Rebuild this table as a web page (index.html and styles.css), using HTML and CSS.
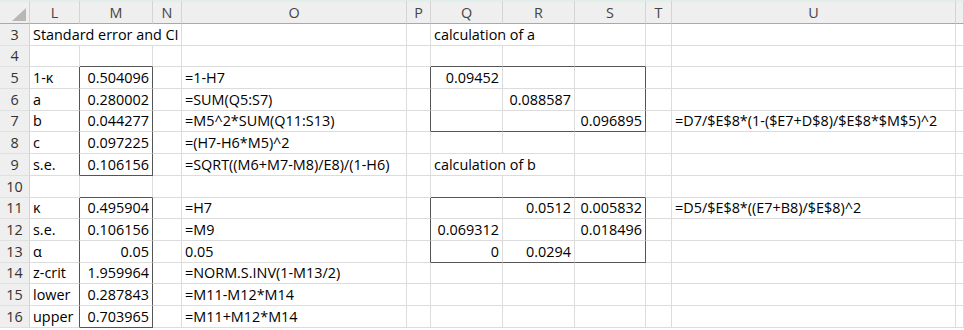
FILE: index.html
```html
<!DOCTYPE html>
<html>
    <head>
        <meta charset='utf-8'>
        <title>Standard error and CI</title>
        <link rel="stylesheet" href="styles.css">
    </head>
    <body>
        <table class="sheet">
            <colgroup>
                <col class="c-hdr"><col class="c-l"><col class="c-m"><col class="c-n"><col class="c-o"><col class="c-p">
                <col class="c-q"><col class="c-r"><col class="c-s"><col class="c-t"><col class="c-u"><col class="c-v">
            </colgroup>
            <tr class="colhead">
                <th class="corner"><span class="tri"></span></th>
                <th>L</th><th>M</th><th>N</th><th>O</th><th>P</th><th>Q</th><th>R</th><th>S</th><th>T</th><th>U</th><th></th>
            </tr>
            <tr>
                <th>3</th><td colspan="3">Standard error and CI</td><td></td><td></td><td colspan="2">calculation of a</td><td></td><td></td><td></td><td></td>
            </tr>
            <tr>
                <th>4</th><td></td><td class="b"></td><td></td><td></td><td></td><td class="b"></td><td class="b"></td><td class="b"></td><td></td><td></td><td></td>
            </tr>
            <tr>
                <th>5</th><td class="r">1-κ</td><td class="n r">0.504096</td><td></td><td>=1-H7</td><td class="r"></td><td class="n">0.09452</td><td></td><td class="r"></td><td></td><td></td><td></td>
            </tr>
            <tr>
                <th>6</th><td class="r">a</td><td class="n r">0.280002</td><td></td><td>=SUM(Q5:S7)</td><td class="r"></td><td></td><td class="n">0.088587</td><td class="r"></td><td></td><td></td><td></td>
            </tr>
            <tr>
                <th>7</th><td class="r">b</td><td class="n r">0.044277</td><td></td><td>=M5^2*SUM(Q11:S13)</td><td class="r"></td><td class="b"></td><td class="b"></td><td class="n r b">0.096895</td><td></td><td>=D7/$E$8*(1-($E7+D$8)/$E$8*$M$5)^2</td><td></td>
            </tr>
            <tr>
                <th>8</th><td class="r">c</td><td class="n r">0.097225</td><td></td><td>=(H7-H6*M5)^2</td><td></td><td></td><td></td><td></td><td></td><td></td><td></td>
            </tr>
            <tr>
                <th>9</th><td class="r">s.e.</td><td class="n r b">0.106156</td><td></td><td>=SQRT((M6+M7-M8)/E8)/(1-H6)</td><td></td><td colspan="2">calculation of b</td><td></td><td></td><td></td><td></td>
            </tr>
            <tr>
                <th>10</th><td></td><td class="b"></td><td></td><td></td><td></td><td class="b"></td><td class="b"></td><td class="b"></td><td></td><td></td><td></td>
            </tr>
            <tr>
                <th>11</th><td class="r">κ</td><td class="n r">0.495904</td><td></td><td>=H7</td><td class="r"></td><td></td><td class="n">0.0512</td><td class="n r">0.005832</td><td></td><td>=D5/$E$8*((E7+B8)/$E$8)^2</td><td></td>
            </tr>
            <tr>
                <th>12</th><td class="r">s.e.</td><td class="n r">0.106156</td><td></td><td>=M9</td><td class="r"></td><td class="n">0.069312</td><td></td><td class="n r">0.018496</td><td></td><td></td><td></td>
            </tr>
            <tr>
                <th>13</th><td class="r">α</td><td class="n r">0.05</td><td></td><td>0.05</td><td class="r"></td><td class="n b">0</td><td class="n b">0.0294</td><td class="r b"></td><td></td><td></td><td></td>
            </tr>
            <tr>
                <th>14</th><td class="r">z-crit</td><td class="n r">1.959964</td><td></td><td>=NORM.S.INV(1-M13/2)</td><td></td><td></td><td></td><td></td><td></td><td></td><td></td>
            </tr>
            <tr>
                <th>15</th><td class="r">lower</td><td class="n r">0.287843</td><td></td><td>=M11-M12*M14</td><td></td><td></td><td></td><td></td><td></td><td></td><td></td>
            </tr>
            <tr>
                <th>16</th><td class="r">upper</td><td class="n r b">0.703965</td><td></td><td>=M11+M12*M14</td><td></td><td></td><td></td><td></td><td></td><td></td><td></td>
            </tr>
        </table>
    </body>
</html>
```

FILE: styles.css
```css
html, body {
    margin: 0;
    background: #fff;
    overflow: hidden;
}
.sheet {
    border-collapse: separate;
    border-spacing: 0;
    table-layout: fixed;
    width: 964px;
    font: 14.4px/18px "Open Sans", sans-serif;
    color: #000;
}
.c-hdr { width: 30px; }
.c-l { width: 50px; }
.c-m { width: 73px; }
.c-n { width: 29px; }
.c-o { width: 225px; }
.c-p { width: 24px; }
.c-q, .c-r { width: 72px; }
.c-s { width: 71px; }
.c-t { width: 26px; }
.c-u { width: 284px; }
.c-v { width: 8px; }

.sheet tr {
    height: 21.7px;
}
.sheet td, .sheet th {
    box-sizing: border-box;
    padding: 0 3px 1px 3px;
    border-right: 1px solid #dcdcdc;
    border-bottom: 1px solid #dcdcdc;
    vertical-align: bottom;
    white-space: nowrap;
    overflow: hidden;
    font-weight: normal;
}
/* row numbers */
.sheet th {
    background: #efefef;
    color: #333;
    text-align: center;
    padding: 0 0 1px 0;
    border-bottom-color: #e0e0e0;
    border-right-color: #d4d4d4;
}
/* column letters */
.colhead {
    height: 24px !important;
}
.colhead th {
    border-top: 2px solid #e1efeb;
    border-bottom: 1px solid #a9a9a9;
    border-right-color: #d4d4d4;
    color: #444;
    vertical-align: middle;
    padding: 0;
}
.corner {
    position: relative;
}
.tri {
    position: absolute;
    right: 3px;
    bottom: 2px;
    width: 0;
    height: 0;
    border-left: 14px solid transparent;
    border-bottom: 13px solid #b7b7b7;
}
.n {
    text-align: right;
}
/* box edges: right and bottom lines drawn dark */
.sheet td.r {
    border-right-color: #555;
}
.sheet td.b {
    border-bottom-color: #555;
}
```
